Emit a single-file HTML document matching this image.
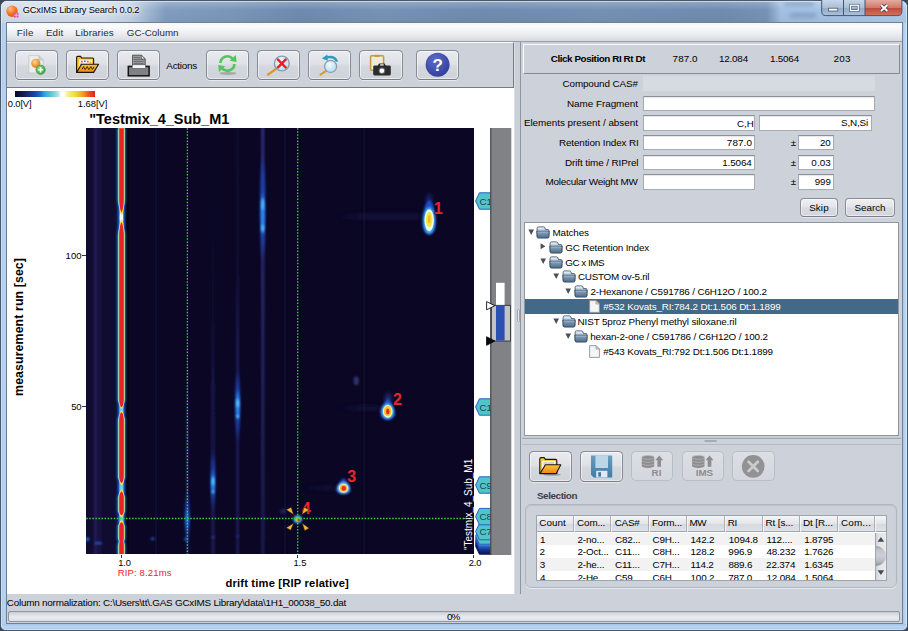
<!DOCTYPE html>
<html><head><meta charset="utf-8"><title>GCxIMS Library Search 0.0.2</title>
<style>
*{box-sizing:border-box;margin:0;padding:0}
html,body{width:908px;height:631px;overflow:hidden}
body{position:relative;font-family:"Liberation Sans",sans-serif;font-size:11px;color:#000;background:#3a4556}
.a{position:absolute}
.t{position:absolute;white-space:nowrap;line-height:1}
#frame{left:0;top:0;width:908px;height:631px;border-radius:7px 7px 6px 6px;border:1px solid #4a586c;background:linear-gradient(90deg,#9fc0e4,#b9d6f4 3px,#a4c6ea 6px,#a4c6ea 902px,#bcd8f6 904px,#a2c2e6 907px)}
#tbar{left:1px;top:1px;width:906px;height:22px;border-radius:6px 6px 0 0;background:linear-gradient(rgba(255,255,255,.25),rgba(255,255,255,0) 40%,rgba(0,0,0,.04)),linear-gradient(90deg,#d2dcea 0,#d6e0ed 100px,#c3d2e4 130px,#9fb6d2 148px,#819dbf 165px,#7a97ba 230px,#6e8baf 300px,#7693b6 380px,#6f8cb0 480px,#7491b4 600px,#6f8cb0 720px,#7693b7 766px,#a2c0e2 780px,#a8c5e6 850px,#b0cbea 906px)}
#bbar{left:1px;top:624px;width:906px;height:6px;border-radius:0 0 5px 5px;background:linear-gradient(#a4c6ea,#bad6f4 50%,#9fc0e4)}
#frame2{left:1px;top:1px;width:906px;height:629px;border-radius:6px 6px 5px 5px;border:1px solid rgba(235,244,252,.6)}
#content{left:5.5px;top:22px;width:897px;height:602px;background:#cdd1d9;border:1px solid #728096}
#menubar{left:6.5px;top:23px;width:895px;height:18.7px;background:linear-gradient(#f6f7f9 0,#fbfbfc 20%,#f0f1f4 50%,#e2e4e9 80%,#d6d9df 100%);border-bottom:1px solid #989da6}
.btn{position:absolute;border-radius:4.5px;border:1px solid #888d97;border-bottom-color:#797e88;background:linear-gradient(#e9ebef 0%,#dee1e6 45%,#d4d7dd 55%,#cfd3da 100%);box-shadow:inset 0 0 0 1px rgba(255,255,255,.5),0 1px 0 rgba(255,255,255,.5)}
.btn2{position:absolute;border-radius:4px;border:1px solid #888d97;border-bottom-color:#797e88;background:linear-gradient(#eff0f3 0%,#e3e5ea 45%,#d7dae0 55%,#d3d6dc 100%);box-shadow:inset 0 0 0 1px rgba(255,255,255,.5),0 1px 0 rgba(255,255,255,.5)}
.btnd{position:absolute;border-radius:4.5px;border:1px solid #b9bdc6;background:linear-gradient(#dcdfe4,#d3d6dd)}
</style></head><body>
<div class="a" id="frame"></div><div class="a" id="tbar"></div><div class="a" id="bbar"></div><div class="a" style="left:784px;top:2px;width:30px;height:4px;background:#7f9cbf;filter:blur(2px);opacity:.8"></div><div class="a" style="left:790px;top:13px;width:26px;height:5px;background:#7f9cbf;filter:blur(2px);opacity:.85"></div><div class="a" id="frame2"></div>
<div class="a" id="content"></div>
<div class="a" id="menubar"></div>
<div class="t" style="left:22.73px;top:6.33px;font-size:9.30px;letter-spacing:-0.180px;color:#000;text-shadow:0 0 5px rgba(255,255,255,.9),0 0 3px rgba(255,255,255,.8),0 0 8px rgba(255,255,255,.7)">GCxIMS Library Search 0.0.2</div>
<svg class="a" style="left:5px;top:4px" width="15" height="15" viewBox="5 4 15 15"><defs><radialGradient id="ti" cx=".35" cy=".3" r=".8"><stop offset="0" stop-color="#ffc08a"/><stop offset=".5" stop-color="#f47a2a"/><stop offset="1" stop-color="#d8521a"/></radialGradient></defs><circle cx="12" cy="11.2" r="5.7" fill="url(#ti)"/><rect x="14" y="13" width="4.4" height="4.4" fill="#e040a0"/><path d="M14 15.2H18.4M16.2 13V17.4" stroke="#fbd0ea" stroke-width=".8"/></svg>
<svg class="a" style="left:820px;top:0" width="84" height="18" viewBox="820 0 84 18">
<defs><linearGradient id="cb" x1="0" y1="0" x2="0" y2="1"><stop offset="0" stop-color="#c6d6ea"/><stop offset=".5" stop-color="#a9bfd9"/><stop offset=".52" stop-color="#93adcc"/><stop offset="1" stop-color="#a8c0dc"/></linearGradient>
<linearGradient id="cr" x1="0" y1="0" x2="0" y2="1"><stop offset="0" stop-color="#e2aca2"/><stop offset=".5" stop-color="#d07868"/><stop offset=".52" stop-color="#c04a3a"/><stop offset="1" stop-color="#d0725e"/></linearGradient></defs>
<path d="M821.7 0 L821.7 11.5 Q821.7 15.6 825.7 15.6 L865 15.6 L865 0Z" fill="url(#cb)"/>
<path d="M865 0 L865 15.6 L897.9 15.6 Q901.9 15.6 901.9 11.5 L901.9 0Z" fill="url(#cr)"/>
<path d="M821.7 0 L821.7 11.5 Q821.7 15.6 825.7 15.6 L897.9 15.6 Q901.9 15.6 901.9 11.5 L901.9 0 M843.5 0V15.6M865 0V15.6" fill="none" stroke="#47556a" stroke-width="1"/>
<rect x="828.4" y="8.2" width="9.4" height="2.8" fill="#fff" stroke="#4a5668" stroke-width=".8"/>
<rect x="850.6" y="5.2" width="7.6" height="5.4" fill="none" stroke="#4a5668" stroke-width="2.6"/><rect x="850.6" y="5.2" width="7.6" height="5.4" fill="none" stroke="#fff" stroke-width="1.3"/>
<path d="M881 5 L887.4 11 M887.4 5 L881 11" stroke="#4a3038" stroke-width="3.4"/><path d="M881 5 L887.4 11 M887.4 5 L881 11" stroke="#fff" stroke-width="2"/>
</svg>
<div class="t" style="left:16.82px;top:27.60px;font-size:9.80px;letter-spacing:0.266px;color:#262b35">File</div>
<div class="t" style="left:45.92px;top:27.60px;font-size:9.80px;letter-spacing:0.159px;color:#262b35">Edit</div>
<div class="t" style="left:75.22px;top:27.60px;font-size:9.80px;letter-spacing:0.118px;color:#262b35">Libraries</div>
<div class="t" style="left:126.81px;top:27.60px;font-size:9.80px;letter-spacing:0.004px;color:#262b35">GC-Column</div>

<div class="a" style="left:6.5px;top:42.0px;width:507.7px;height:46.0px;background:#cdd1d9;border-top:1px solid #fafbfc;border-right:1px solid #767b85;border-bottom:1px solid #767b85"></div>
<div class="btn" style="left:14.6px;top:50.0px;width:43.0px;height:30.2px;"></div>
<div class="btn" style="left:65.6px;top:50.0px;width:43.4px;height:30.2px;"></div>
<div class="btn" style="left:116.6px;top:50.0px;width:43.6px;height:30.2px;"></div>
<div class="btn" style="left:205.6px;top:50.0px;width:43.6px;height:30.2px;"></div>
<div class="btn" style="left:256.6px;top:50.0px;width:43.6px;height:30.2px;"></div>
<div class="btn" style="left:307.8px;top:50.0px;width:43.5px;height:30.2px;"></div>
<div class="btn" style="left:359.2px;top:50.0px;width:43.5px;height:30.2px;"></div>
<div class="btn" style="left:415.6px;top:50.0px;width:43.8px;height:30.2px;"></div>
<div class="t" style="left:166.30px;top:60.62px;font-size:9.90px;letter-spacing:-0.238px">Actions</div>
<svg class="a" style="left:8px;top:42px" width="506" height="46" viewBox="8 42 506 46">
<defs>
<radialGradient id="og" cx=".4" cy=".35" r=".7"><stop offset="0" stop-color="#fbd9a0"/><stop offset=".5" stop-color="#f3a040"/><stop offset="1" stop-color="#e07818"/></radialGradient>
<radialGradient id="gg" cx=".4" cy=".35" r=".7"><stop offset="0" stop-color="#8fe08a"/><stop offset="1" stop-color="#2f9e34"/></radialGradient>
<radialGradient id="lg" cx=".4" cy=".35" r=".8"><stop offset="0" stop-color="#eefaff"/><stop offset="1" stop-color="#a9d8ea"/></radialGradient>
<radialGradient id="hg" cx=".4" cy=".3" r=".8"><stop offset="0" stop-color="#5a6cc8"/><stop offset="1" stop-color="#2e3a98"/></radialGradient>
<linearGradient id="fo" x1="0" y1="0" x2="0" y2="1"><stop offset="0" stop-color="#fbc33a"/><stop offset="1" stop-color="#ee8a18"/></linearGradient>
</defs>
<path d="M28.8 55.6 L38.8 55.6 L43.2 60 L43.2 73 L28.8 73Z" fill="#ecedef" stroke="#c3c6cc" stroke-width=".8"/><path d="M38.8 55.6 L38.8 60 L43.2 60Z" fill="#cfd2d8" stroke="#b4b8bf" stroke-width=".6"/>
<circle cx="35.8" cy="63.3" r="4.6" fill="url(#og)"/>
<circle cx="40.6" cy="69.8" r="4.7" fill="url(#gg)" stroke="#2c8a30" stroke-width=".5"/><path d="M38 69.8H43.2M40.6 67.2V72.4" stroke="#fff" stroke-width="1.6"/>
<path d="M76.6 72 L76.6 57.6 Q76.6 56.4 77.8 56.4 L80.6 56.4 L81.6 58 L92.6 58 Q93.6 58 93.6 59 L93.6 72Z" fill="#f6c52a" stroke="#1c1508" stroke-width="1.1" stroke-linejoin="round"/>
<path d="M79.2 70 L79.2 59.6 L92 59.6 L92 70Z" fill="#f5efe0"/><g><rect x="81" y="60.8" width="1.6" height="1.6" fill="#e05a2a"/><rect x="84" y="60.4" width="1.6" height="1.6" fill="#4a7ad0"/><rect x="87" y="60.8" width="1.6" height="1.6" fill="#e05a2a"/><rect x="89.6" y="61.6" width="1.6" height="1.6" fill="#e8a030"/><rect x="80.4" y="63.6" width="1.6" height="1.6" fill="#4a7ad0"/></g>
<path d="M76.6 72.4 L81.6 64.2 L98.6 64.2 L93.6 72.4Z" fill="url(#fo)" stroke="#1c1508" stroke-width="1.1" stroke-linejoin="round"/>
<path d="M82 69.4 L83.6 66.6 L85.2 69.6 L87.2 66.6 L88.8 69.6 L90.8 66.6 L92.4 69.4 L94 66.8" fill="none" stroke="#1c1508" stroke-width=".9"/>
<path d="M132.6 55.2 L141.4 55.2 L145.2 59 L145.2 68.8 L132.6 68.8Z" fill="#9b9c9f" stroke="#3a3a3c" stroke-width=".8"/>
<path d="M141.4 55.2 L141.4 59 L145.2 59Z" fill="#e6e6e8" stroke="#3a3a3c" stroke-width=".6"/>
<path d="M134 57.6H140M134 59.6H143.6M134 61.6H143.6M134 63.6H143.6" stroke="#5c5d60" stroke-width=".8"/>
<rect x="128.3" y="66.4" width="20.8" height="9.4" fill="#808184" stroke="#141416" stroke-width="1.5"/>
<rect x="132.2" y="64.8" width="13.4" height="3.6" fill="#f4f4f5" stroke="#3a3a3c" stroke-width=".5"/>
<ellipse cx="228" cy="73.4" rx="8.5" ry="1.5" fill="#7c8a7c" opacity=".55"/>
<g fill="none" stroke="#55c45a" stroke-width="2.6"><path d="M220.4 63 A7 7 0 0 1 232.6 58.6"/><path d="M234.4 64 A7 7 0 0 1 222.2 68.4"/></g>
<path d="M229.6 60.8 L236.6 62 L235.8 55Z" fill="#55c45a"/><path d="M225.2 66.2 L218.2 65 L219 72Z" fill="#55c45a"/>
<path d="M276 69 L268 74.6" stroke="#d99a24" stroke-width="2.2" stroke-linecap="round"/>
<circle cx="281.8" cy="63.5" r="7.4" fill="url(#lg)" stroke="#8c9eae" stroke-width="1.4"/>
<path d="M278 59.7 L285.6 67.3 M285.6 59.7 L278 67.3" stroke="#e8202c" stroke-width="2.5" stroke-linecap="round"/>
<path d="M326.4 70.6 L320.4 74.8" stroke="#d99a24" stroke-width="2" stroke-linecap="round"/>
<circle cx="330.6" cy="66.4" r="6" fill="url(#lg)" stroke="#8c9eae" stroke-width="1.3"/>
<path d="M337 61.6 Q334.6 55.6 326.6 57.4" fill="none" stroke="#2e9cc2" stroke-width="2.4"/><path d="M321.8 58.6 L327.4 54.4 L327.8 60.8Z" fill="#2e9cc2"/>
<rect x="370.6" y="55.8" width="13" height="14.4" rx="1" fill="#f1ead8" stroke="#c8964a" stroke-width="1.5"/><rect x="374.6" y="54.8" width="5" height="2.2" fill="#c8964a"/>
<path d="M373.2 66.8 Q373.2 65.4 374.6 65.4 L377.8 65.4 L379 63.4 L384.6 63.4 L385.8 65.4 L389.4 65.4 Q390.8 65.4 390.8 66.8 L390.8 74 Q390.8 75.4 389.4 75.4 L374.6 75.4 Q373.2 75.4 373.2 74Z" fill="#2c2c2e"/>
<circle cx="381.9" cy="70.8" r="3.3" fill="#6a6a6e"/><circle cx="381.9" cy="70.8" r="2.3" fill="#fff"/><rect x="380.2" y="64.2" width="3.4" height="1.4" fill="#e8e8ea"/>
<circle cx="437.6" cy="64.8" r="12" fill="url(#hg)"/>
<text x="437.7" y="70.8" text-anchor="middle" font-family="Liberation Sans, sans-serif" font-weight="bold" font-size="17" fill="#fff">?</text>
</svg>

<div class="a" style="left:6.8px;top:88.0px;width:507.4px;height:506.0px;background:#fff"></div>
<div class="a" style="left:15px;top:90.8px;width:80px;height:5.8px;background:linear-gradient(90deg,#07071f 0%,#14205c 12%,#1b46a8 25%,#1e6fd0 32%,#2ea6e2 37%,#5cc6d4 45%,#a8e0e4 53%,#ffffff 58%,#ffffff 61%,#f6f08c 66%,#efe236 74%,#f6a324 84%,#ee4a22 93%,#e61f22 100%)"></div>
<div class="t" style="left:7.87px;top:99.14px;font-size:9.40px;letter-spacing:-0.159px">0.0[V]</div>
<div class="t" style="left:77.80px;top:99.14px;font-size:9.40px;letter-spacing:-0.023px">1.68[V]</div>
<div class="t" style="left:89.26px;top:111.53px;font-size:14.50px;letter-spacing:-0.022px;font-weight:bold">&quot;Testmix_4_Sub_M1</div>
<svg class="a" style="left:85.8px;top:127.8px" width="388.4" height="426.7" viewBox="85.8 127.8 388.4 426.7">
<defs>
<filter id="b03" x="-50%" y="-5%" width="200%" height="110%"><feGaussianBlur stdDeviation="0.35"/></filter>
<filter id="b05" x="-50%" y="-5%" width="200%" height="110%"><feGaussianBlur stdDeviation="0.6"/></filter>
<filter id="b3h" x="-30%" y="-200%" width="160%" height="500%"><feGaussianBlur stdDeviation="8 2"/></filter>
<filter id="b1" x="-50%" y="-50%" width="200%" height="200%"><feGaussianBlur stdDeviation="1"/></filter>
<filter id="b2" x="-50%" y="-50%" width="200%" height="200%"><feGaussianBlur stdDeviation="2"/></filter>
<filter id="b3" x="-100%" y="-50%" width="300%" height="200%"><feGaussianBlur stdDeviation="1.5 6"/></filter>
<filter id="b4" x="-100%" y="-50%" width="300%" height="200%"><feGaussianBlur stdDeviation="1.2 3"/></filter>
</defs>
<rect x="85" y="127" width="390" height="428" fill="#0a0624"/>
<defs>
<linearGradient id="vA" gradientUnits="userSpaceOnUse" x1="0" y1="128" x2="0" y2="555"><stop offset="0" stop-color="#2a2a70" stop-opacity="0"/><stop offset=".45" stop-color="#2a2a70" stop-opacity=".15"/><stop offset=".62" stop-color="#2a2a70" stop-opacity=".55"/><stop offset="1" stop-color="#2a2a70" stop-opacity=".6"/></linearGradient>
<linearGradient id="vB" gradientUnits="userSpaceOnUse" x1="0" y1="128" x2="0" y2="555"><stop offset="0" stop-color="#2a2a70" stop-opacity="0"/><stop offset=".55" stop-color="#2a2a70" stop-opacity=".08"/><stop offset=".72" stop-color="#2a2a70" stop-opacity=".5"/><stop offset="1" stop-color="#2a2a70" stop-opacity=".55"/></linearGradient>
<linearGradient id="vC" gradientUnits="userSpaceOnUse" x1="0" y1="128" x2="0" y2="555"><stop offset="0" stop-color="#2c2c74" stop-opacity=".1"/><stop offset=".3" stop-color="#2c2c74" stop-opacity=".15"/><stop offset=".5" stop-color="#2c2c74" stop-opacity=".55"/><stop offset="1" stop-color="#2c2c74" stop-opacity=".55"/></linearGradient>
<linearGradient id="vD" gradientUnits="userSpaceOnUse" x1="0" y1="128" x2="0" y2="555"><stop offset="0" stop-color="#34348a" stop-opacity=".85"/><stop offset=".3" stop-color="#30307c" stop-opacity=".8"/><stop offset="1" stop-color="#2a2a6c" stop-opacity=".6"/></linearGradient>
<filter id="bs" filterUnits="userSpaceOnUse" x="80" y="120" width="400" height="440"><feGaussianBlur stdDeviation="1.1 0"/></filter>
</defs>
<rect x="85" y="127" width="32" height="429" fill="#17133f" opacity=".45"/>
<!-- faint vertical streaks -->
<g filter="url(#bs)">
<rect x="93.5" y="127" width="3.6" height="429" fill="#221f52"/>
<rect x="98.3" y="127" width="2.6" height="429" fill="#1a1744"/>
<rect x="185.7" y="127" width="3" height="429" fill="url(#vB)"/>
<rect x="211.3" y="127" width="3" height="429" fill="url(#vA)"/>
<rect x="236" y="127" width="3" height="429" fill="url(#vC)"/>
<rect x="261" y="127" width="3.2" height="429" fill="url(#vD)"/>
<rect x="363" y="127" width="2.4" height="429" fill="#0d0a2c"/>
<rect x="155" y="127" width="2" height="429" fill="#100d34"/>
<rect x="284" y="127" width="2" height="429" fill="#0f0c31"/>
</g>
<!-- horizontal tails -->
<g filter="url(#b3h)" opacity=".6">
<rect x="350" y="214" width="75" height="5" fill="#1a1a4a"/>
<rect x="350" y="406" width="34" height="4" fill="#1b1b50"/>
<rect x="315" y="486" width="24" height="3.5" fill="#1b1b50"/>
</g>
<rect x="125" y="128" width="3.2" height="427" fill="#04030c"/>
<g filter="url(#b1)"><polygon points="116.6,128.0 116.6,200.0 116.7,201.0 116.9,202.0 117.0,203.0 117.2,204.0 117.4,205.0 117.5,206.0 117.5,228.0 117.4,229.0 117.2,230.0 117.0,231.0 116.9,232.0 116.7,233.0 116.6,234.0 116.6,399.0 116.7,400.0 116.9,401.0 117.2,402.0 117.5,403.0 117.5,416.0 117.2,417.0 116.9,418.0 116.7,419.0 116.6,420.0 116.6,477.0 116.9,478.0 117.3,479.0 117.5,480.0 117.5,494.0 117.3,495.0 116.9,496.0 116.6,497.0 116.6,511.0 117.0,512.0 117.5,513.0 117.5,524.0 117.0,525.0 116.6,526.0 116.6,538.0 116.8,539.0 117.1,540.0 117.5,541.0 117.5,542.0 117.1,543.0 116.8,544.0 116.6,545.0 116.6,554.0 125.8,554.0 125.8,545.0 125.6,544.0 125.3,543.0 124.9,542.0 124.9,541.0 125.3,540.0 125.6,539.0 125.8,538.0 125.8,526.0 125.4,525.0 124.9,524.0 124.9,513.0 125.4,512.0 125.8,511.0 125.8,497.0 125.5,496.0 125.1,495.0 124.9,494.0 124.9,480.0 125.1,479.0 125.5,478.0 125.8,477.0 125.8,420.0 125.7,419.0 125.5,418.0 125.2,417.0 124.9,416.0 124.9,403.0 125.2,402.0 125.5,401.0 125.7,400.0 125.8,399.0 125.8,234.0 125.7,233.0 125.5,232.0 125.4,231.0 125.2,230.0 125.0,229.0 124.9,228.0 124.9,206.0 125.0,205.0 125.2,204.0 125.4,203.0 125.5,202.0 125.7,201.0 125.8,200.0 125.8,128.0" fill="#1c64d2"/></g>
<g filter="url(#b05)"><polygon points="117.7,128.0 117.7,200.0 117.8,201.0 117.9,202.0 118.0,203.0 118.2,204.0 118.3,205.0 118.5,206.0 118.8,207.0 119.0,208.0 119.2,209.0 119.2,225.0 119.0,226.0 118.8,227.0 118.5,228.0 118.3,229.0 118.2,230.0 118.0,231.0 117.9,232.0 117.8,233.0 117.7,234.0 117.7,399.0 117.8,400.0 117.9,401.0 118.1,402.0 118.4,403.0 118.8,404.0 119.2,405.0 119.2,406.0 119.2,413.0 119.2,414.0 118.8,415.0 118.4,416.0 118.1,417.0 117.9,418.0 117.8,419.0 117.7,420.0 117.7,477.0 117.9,478.0 118.2,479.0 118.6,480.0 119.2,481.0 119.2,482.0 119.2,492.0 119.2,493.0 118.6,494.0 118.2,495.0 117.9,496.0 117.7,497.0 117.7,511.0 118.0,512.0 118.5,513.0 119.2,514.0 119.2,523.0 118.5,524.0 118.0,525.0 117.7,526.0 117.7,538.0 117.9,539.0 118.1,540.0 118.4,541.0 118.4,542.0 118.1,543.0 117.9,544.0 117.7,545.0 117.7,554.0 124.7,554.0 124.7,545.0 124.5,544.0 124.3,543.0 124.0,542.0 124.0,541.0 124.3,540.0 124.5,539.0 124.7,538.0 124.7,526.0 124.4,525.0 123.9,524.0 123.2,523.0 123.2,514.0 123.9,513.0 124.4,512.0 124.7,511.0 124.7,497.0 124.5,496.0 124.2,495.0 123.8,494.0 123.2,493.0 123.2,492.0 123.2,482.0 123.2,481.0 123.8,480.0 124.2,479.0 124.5,478.0 124.7,477.0 124.7,420.0 124.6,419.0 124.5,418.0 124.3,417.0 124.0,416.0 123.7,415.0 123.2,414.0 123.2,413.0 123.2,406.0 123.2,405.0 123.7,404.0 124.0,403.0 124.3,402.0 124.5,401.0 124.6,400.0 124.7,399.0 124.7,234.0 124.6,233.0 124.5,232.0 124.4,231.0 124.2,230.0 124.1,229.0 123.9,228.0 123.6,227.0 123.4,226.0 123.2,225.0 123.2,209.0 123.4,208.0 123.6,207.0 123.9,206.0 124.1,205.0 124.2,204.0 124.4,203.0 124.5,202.0 124.6,201.0 124.7,200.0 124.7,128.0" fill="#6fcbee"/></g>
<ellipse cx="121.2" cy="217" rx="1.6" ry="6" fill="#fff" filter="url(#b05)"/>
<g filter="url(#b05)"><polygon points="118.5,128.0 118.5,200.0 118.6,201.0 118.6,202.0 118.7,203.0 118.8,204.0 118.9,205.0 119.0,206.0 119.1,207.0 119.3,208.0 119.4,209.0 119.6,210.0 119.8,211.0 120.0,212.0 120.4,213.0 120.8,214.0 121.4,215.0 121.4,219.0 120.8,220.0 120.4,221.0 120.0,222.0 119.8,223.0 119.6,224.0 119.4,225.0 119.3,226.0 119.1,227.0 119.0,228.0 118.9,229.0 118.8,230.0 118.7,231.0 118.6,232.0 118.6,233.0 118.5,234.0 118.5,399.0 118.5,400.0 118.7,401.0 118.8,402.0 119.0,403.0 119.2,404.0 119.4,405.0 119.7,406.0 120.1,407.0 120.7,408.0 121.4,409.0 121.4,410.0 120.7,411.0 120.1,412.0 119.7,413.0 119.4,414.0 119.2,415.0 119.0,416.0 118.8,417.0 118.7,418.0 118.5,419.0 118.5,420.0 118.5,477.0 118.6,478.0 118.8,479.0 118.9,480.0 119.2,481.0 119.4,482.0 119.8,483.0 120.3,484.0 121.4,485.0 121.4,489.0 120.3,490.0 119.8,491.0 119.4,492.0 119.2,493.0 118.9,494.0 118.8,495.0 118.6,496.0 118.5,497.0 118.5,511.0 118.7,512.0 118.9,513.0 119.2,514.0 119.6,515.0 120.1,516.0 121.4,517.0 121.4,520.0 120.1,521.0 119.6,522.0 119.2,523.0 118.9,524.0 118.7,525.0 118.5,526.0 118.5,538.0 118.7,539.0 119.0,540.0 119.4,541.0 119.4,542.0 119.0,543.0 118.7,544.0 118.5,545.0 118.5,554.0 124.3,554.0 124.3,545.0 124.1,544.0 123.8,543.0 123.4,542.0 123.4,541.0 123.8,540.0 124.1,539.0 124.3,538.0 124.3,526.0 124.1,525.0 123.9,524.0 123.6,523.0 123.2,522.0 122.7,521.0 121.4,520.0 121.4,517.0 122.7,516.0 123.2,515.0 123.6,514.0 123.9,513.0 124.1,512.0 124.3,511.0 124.3,497.0 124.2,496.0 124.0,495.0 123.9,494.0 123.6,493.0 123.4,492.0 123.0,491.0 122.5,490.0 121.4,489.0 121.4,485.0 122.5,484.0 123.0,483.0 123.4,482.0 123.6,481.0 123.9,480.0 124.0,479.0 124.2,478.0 124.3,477.0 124.3,420.0 124.3,419.0 124.1,418.0 124.0,417.0 123.8,416.0 123.6,415.0 123.4,414.0 123.1,413.0 122.7,412.0 122.1,411.0 121.4,410.0 121.4,409.0 122.1,408.0 122.7,407.0 123.1,406.0 123.4,405.0 123.6,404.0 123.8,403.0 124.0,402.0 124.1,401.0 124.3,400.0 124.3,399.0 124.3,234.0 124.2,233.0 124.2,232.0 124.1,231.0 124.0,230.0 123.9,229.0 123.8,228.0 123.7,227.0 123.5,226.0 123.4,225.0 123.2,224.0 123.0,223.0 122.8,222.0 122.4,221.0 122.0,220.0 121.4,219.0 121.4,215.0 122.0,214.0 122.4,213.0 122.8,212.0 123.0,211.0 123.2,210.0 123.4,209.0 123.5,208.0 123.7,207.0 123.8,206.0 123.9,205.0 124.0,204.0 124.1,203.0 124.2,202.0 124.2,201.0 124.3,200.0 124.3,128.0" fill="#f1e23a"/></g>
<g filter="url(#b03)"><polygon points="119.0,128.0 119.0,200.0 119.0,201.0 119.1,202.0 119.2,203.0 119.3,204.0 119.4,205.0 119.5,206.0 119.7,207.0 119.9,208.0 120.1,209.0 120.4,210.0 120.8,211.0 121.3,212.0 121.3,222.0 120.8,223.0 120.4,224.0 120.1,225.0 119.9,226.0 119.7,227.0 119.5,228.0 119.4,229.0 119.3,230.0 119.2,231.0 119.1,232.0 119.0,233.0 119.0,234.0 119.0,399.0 119.0,400.0 119.1,401.0 119.2,402.0 119.4,403.0 119.7,404.0 119.9,405.0 120.3,406.0 121.3,407.0 121.3,412.0 120.3,413.0 119.9,414.0 119.7,415.0 119.4,416.0 119.2,417.0 119.1,418.0 119.0,419.0 119.0,420.0 119.0,477.0 119.1,478.0 119.3,479.0 119.6,480.0 119.9,481.0 120.5,482.0 121.3,483.0 121.3,491.0 120.5,492.0 119.9,493.0 119.6,494.0 119.3,495.0 119.1,496.0 119.0,497.0 119.0,511.0 119.2,512.0 119.5,513.0 120.0,514.0 121.3,515.0 121.3,522.0 120.0,523.0 119.5,524.0 119.2,525.0 119.0,526.0 119.0,538.0 119.1,539.0 119.2,540.0 119.4,541.0 119.4,542.0 119.2,543.0 119.1,544.0 119.0,545.0 119.0,554.0 123.6,554.0 123.6,545.0 123.5,544.0 123.4,543.0 123.2,542.0 123.2,541.0 123.4,540.0 123.5,539.0 123.6,538.0 123.6,526.0 123.4,525.0 123.1,524.0 122.6,523.0 121.3,522.0 121.3,515.0 122.6,514.0 123.1,513.0 123.4,512.0 123.6,511.0 123.6,497.0 123.5,496.0 123.3,495.0 123.0,494.0 122.7,493.0 122.1,492.0 121.3,491.0 121.3,483.0 122.1,482.0 122.7,481.0 123.0,480.0 123.3,479.0 123.5,478.0 123.6,477.0 123.6,420.0 123.6,419.0 123.5,418.0 123.4,417.0 123.2,416.0 122.9,415.0 122.7,414.0 122.3,413.0 121.3,412.0 121.3,407.0 122.3,406.0 122.7,405.0 122.9,404.0 123.2,403.0 123.4,402.0 123.5,401.0 123.6,400.0 123.6,399.0 123.6,234.0 123.6,233.0 123.5,232.0 123.4,231.0 123.3,230.0 123.2,229.0 123.1,228.0 122.9,227.0 122.7,226.0 122.5,225.0 122.2,224.0 121.8,223.0 121.3,222.0 121.3,212.0 121.8,211.0 122.2,210.0 122.5,209.0 122.7,208.0 122.9,207.0 123.1,206.0 123.2,205.0 123.3,204.0 123.4,203.0 123.5,202.0 123.6,201.0 123.6,200.0 123.6,128.0" fill="#ea2225"/></g>

<!-- blue streaks -->
<g filter="url(#b3)">
<ellipse cx="262.5" cy="208" rx="2.4" ry="46" fill="#1a3fb0"/>
<ellipse cx="237.5" cy="405" rx="2.3" ry="30" fill="#1a3fb0"/>
<ellipse cx="212.8" cy="480" rx="2.2" ry="24" fill="#1a3fb0"/>
<ellipse cx="187" cy="517" rx="2.2" ry="20" fill="#1a3fb0"/>
</g>
<g filter="url(#b4)">
<ellipse cx="262.5" cy="214" rx="1.9" ry="19" fill="#2a8cf0"/>
<ellipse cx="237.5" cy="405" rx="1.9" ry="13" fill="#2a8cf0"/>
<ellipse cx="212.8" cy="483" rx="1.8" ry="10" fill="#2a8cf0"/>
<ellipse cx="187" cy="519" rx="1.6" ry="8" fill="#2574dc"/>
</g>
<g filter="url(#b1)">
<ellipse cx="262.5" cy="204" rx="1.1" ry="6" fill="#55c8f4"/>
<ellipse cx="262.5" cy="228" rx="1.2" ry="4" fill="#55c8f4"/>
<ellipse cx="237.5" cy="403" rx="1.2" ry="4" fill="#5fd0f6"/>
<ellipse cx="237.5" cy="416" rx="1.2" ry="2" fill="#5fd0f6"/>
<ellipse cx="212.8" cy="481" rx="1.1" ry="4" fill="#5fd0f6"/>
<ellipse cx="212.8" cy="491.5" rx="1.1" ry="1.6" fill="#5fd0f6"/>
<!-- bottom row spots -->
<ellipse cx="87.5" cy="539" rx="1.5" ry="2" fill="#2a78e0"/>
<ellipse cx="98" cy="543" rx="4" ry="1.1" fill="#2a55c0"/>
<ellipse cx="152.5" cy="538.5" rx="2.2" ry="1.8" fill="#2d3f9a"/>
<ellipse cx="186" cy="539" rx="2" ry="2" fill="#2450b8"/>
<ellipse cx="213" cy="537" rx="1.8" ry="2" fill="#222c78"/>
<ellipse cx="237.5" cy="536" rx="1.6" ry="2" fill="#1e2468"/>
<ellipse cx="356" cy="380.5" rx="2.6" ry="4.5" fill="#30306e"/>
<ellipse cx="283" cy="511" rx="3" ry="2.5" fill="#23235c"/>
</g>
<!-- peak 1 -->
<g filter="url(#b2)"><ellipse cx="429" cy="203" rx="2.6" ry="10" fill="#1f2878"/></g>
<g filter="url(#b1)">
<path d="M429 199 C432.5 203 435.8 211 435.8 221 C435.8 230 433 234.5 429 234.5 C425 234.5 422.2 230 422.2 221 C422.2 211 425.5 203 429 199Z" fill="#1b50d0"/>
<ellipse cx="429" cy="220.5" rx="5.6" ry="13" fill="#45b6ee"/>
</g>
<g filter="url(#b05)">
<ellipse cx="429" cy="220" rx="4.7" ry="11" fill="#f4fbf6"/>
<ellipse cx="429" cy="219.3" rx="3.3" ry="7.8" fill="#f3e544"/>
<ellipse cx="429" cy="219" rx="1.3" ry="4" fill="#f5b62a"/>
</g>
<!-- peak 2 -->
<g filter="url(#b2)"><ellipse cx="388" cy="399" rx="2.5" ry="6" fill="#2a3a90"/></g>
<g filter="url(#b1)">
<path d="M387.5 398.5 C391 402 394.8 407.5 394.8 412.5 C394.8 417.5 391.5 419.8 387.5 419.8 C383.5 419.8 380.2 417.5 380.2 412.5 C380.2 407.5 384 402 387.5 398.5Z" fill="#1b56d6"/>
<ellipse cx="387.5" cy="411.2" rx="5.9" ry="7.4" fill="#55c4f0"/>
</g>
<g filter="url(#b05)">
<ellipse cx="387.5" cy="411.2" rx="4.8" ry="6.3" fill="#f6f6d0"/>
<ellipse cx="387.5" cy="411" rx="3.8" ry="5.1" fill="#f4c62c"/>
<ellipse cx="387.6" cy="411.2" rx="1.7" ry="2.8" fill="#ea2a22"/>
</g>
<!-- peak 3 -->
<g filter="url(#b1)">
<path d="M343.3 478 C347 481 350.5 486 350.5 489.5 C350.5 492.5 347 494 343.3 494 C339.5 494 336 492.5 336 489.5 C336 486 339.5 481 343.3 478Z" fill="#1b56d6"/>
<ellipse cx="343.3" cy="487.8" rx="5.6" ry="5.2" fill="#8fdcf4"/>
</g>
<g filter="url(#b05)">
<ellipse cx="343.3" cy="488" rx="4.5" ry="4.2" fill="#f6f2b0"/>
<ellipse cx="343.3" cy="488" rx="3.6" ry="3.4" fill="#f4b62a"/>
<ellipse cx="343.6" cy="488.2" rx="2.2" ry="2.3" fill="#ea2a22"/>
</g>
<!-- peak 4 -->
<g filter="url(#b1)">
<ellipse cx="297.5" cy="519" rx="4.6" ry="4.2" fill="#1f66d8"/>
<ellipse cx="297.5" cy="519" rx="3.4" ry="3.2" fill="#59c8e0"/>
</g>
<g filter="url(#b05)">
<ellipse cx="297.5" cy="519.3" rx="2.2" ry="2" fill="#9ad23c"/>
<ellipse cx="298.5" cy="520" rx="1.5" ry="1.3" fill="#ea2a22"/>
</g>

<g stroke="#3ad43c" stroke-width="1.3" stroke-dasharray="1.5 1.56" fill="none">
<line x1="187.2" y1="128" x2="187.2" y2="554.5"/>
<line x1="297.5" y1="128" x2="297.5" y2="554.5"/>
<line x1="86" y1="518.3" x2="474.2" y2="518.3"/>
</g>

<g font-family="Liberation Sans, sans-serif" font-weight="bold" font-size="16" fill="#e6252c" stroke="#3a0c14" stroke-width=".5" paint-order="stroke">
<text x="433.5" y="214">1</text>
<text x="392.8" y="405">2</text>
<text x="347" y="482">3</text>
<text x="301.5" y="514">4</text>
</g>
<g fill="#f0b432" stroke="#1a1030" stroke-width=".5">
<path d="M293.5 514.5 L286 509.5 L291 507Z"/>
<path d="M301.5 514.5 L309 509.5 L304 507Z"/>
<path d="M293.5 523 L286 527.5 L290.5 530Z"/>
<path d="M302 523 L309 528 L304.5 530.5Z"/>
</g>
<text transform="translate(472.3,549.8) rotate(-90)" font-family="Liberation Sans, sans-serif" font-size="10" fill="#fff">"Testmix_4_Sub_M1</text>


</svg>

<div class="t" style="left:65.49px;top:250.76px;font-size:9.50px;letter-spacing:0.114px">100</div>
<div class="t" style="left:71.22px;top:401.76px;font-size:9.50px;letter-spacing:-0.232px">50</div>
<div class="a" style="left:81.8px;top:254.8px;width:4.2px;height:1.0px;background:#333"></div>
<div class="a" style="left:81.8px;top:405.8px;width:4.2px;height:1.0px;background:#333"></div>
<div class="a" style="left:120.7px;top:554.5px;width:1.0px;height:3.0px;background:#333"></div>
<div class="a" style="left:297.0px;top:554.5px;width:1.0px;height:3.0px;background:#333"></div>
<div class="a" style="left:473.1px;top:554.5px;width:1.0px;height:3.0px;background:#333"></div>
<div class="t" style="left:118.20px;top:558.34px;font-size:9.40px;letter-spacing:-0.066px">1.0</div>
<div class="t" style="left:293.40px;top:558.34px;font-size:9.40px;letter-spacing:0.007px">1.5</div>
<div class="t" style="left:468.63px;top:558.34px;font-size:9.40px;letter-spacing:-0.084px">2.0</div>
<div class="t" style="left:117.84px;top:567.56px;font-size:9.50px;letter-spacing:0.134px;color:#e8252c">RIP: 8.21ms</div>
<div class="t" style="left:225.45px;top:578.22px;font-size:11.20px;letter-spacing:0.176px;font-weight:bold">drift time [RIP relative]</div>
<svg class="a" style="left:8px;top:240px" width="30" height="170" viewBox="8 240 30 170"><text transform="translate(23.2,395.9) rotate(-90)" font-family="Liberation Sans, sans-serif" font-weight="bold" font-size="12.3" letter-spacing="0.126">measurement run [sec]</text></svg>
<svg class="a" style="left:474px;top:120px" width="40" height="440" viewBox="474 120 40 440" font-family="Liberation Sans, sans-serif" font-size="9.8">
<path d="M475.6 546.0 L479.4 537.8 L492 537.8 L492 554.2 L479.4 554.2 Z" fill="#0e1c62" stroke="#0a1450" stroke-width="1"/>
<path d="M475.6 544.0 L479.4 535.8 L492 535.8 L492 552.2 L479.4 552.2 Z" fill="#14297e" stroke="#10206a" stroke-width="1"/>
<path d="M475.6 542.0 L479.4 533.8 L492 533.8 L492 550.2 L479.4 550.2 Z" fill="#1b3c9c" stroke="#172f86" stroke-width="1"/>
<path d="M475.6 540.0 L479.4 531.8 L492 531.8 L492 548.2 L479.4 548.2 Z" fill="#2458b8" stroke="#1f48a4" stroke-width="1"/>
<path d="M475.6 538.0 L479.4 529.8 L492 529.8 L492 546.2 L479.4 546.2 Z" fill="#3a92d0" stroke="#2b5fc6" stroke-width="1"/>
<path d="M475.6 536.0 L479.4 527.8 L492 527.8 L492 544.2 L479.4 544.2 Z" fill="#4fc5ca" stroke="#2b5fc6" stroke-width="1"/>
<path d="M475.6 531.6 L479.4 523.4 L492 523.4 L492 539.8 L479.4 539.8 Z" fill="#4fc5ca" stroke="#2b5fc6" stroke-width="1"/>
<text x="479.5" y="535.1" fill="#16454c">C7</text>
<path d="M475.6 516.6 L479.4 508.4 L492 508.4 L492 524.8 L479.4 524.8 Z" fill="#4fc5ca" stroke="#2b5fc6" stroke-width="1"/>
<text x="479.5" y="520.1" fill="#16454c">C8</text>
<path d="M475.6 485.0 L479.4 476.8 L492 476.8 L492 493.2 L479.4 493.2 Z" fill="#4fc5ca" stroke="#2b5fc6" stroke-width="1"/>
<text x="479.5" y="488.5" fill="#16454c">C9</text>
<path d="M475.6 407.0 L479.4 398.8 L492 398.8 L492 415.2 L479.4 415.2 Z" fill="#4fc5ca" stroke="#2b5fc6" stroke-width="1"/>
<text x="479.5" y="410.5" fill="#16454c">C1</text>
<path d="M475.6 201.0 L479.4 192.8 L492 192.8 L492 209.2 L479.4 209.2 Z" fill="#4fc5ca" stroke="#2b5fc6" stroke-width="1"/>
<text x="479.5" y="204.5" fill="#16454c">C1</text>
<rect x="490.3" y="128" width="21" height="427" fill="#808285"/>
<rect x="490.3" y="128" width="1" height="427" fill="#3c3c40"/>
<rect x="496" y="282.8" width="8.6" height="22.5" fill="#fff"/>
<rect x="491.3" y="305.3" width="19.3" height="35.7" fill="#c2c3c6" stroke="#222" stroke-width=".8"/>
<rect x="496" y="305.3" width="8.6" height="35.3" fill="#2a50b2"/>
<path d="M486.6 301.6 L494.8 305.7 L486.6 309.8Z" fill="#fff" stroke="#111" stroke-width=".9"/>
<path d="M486.6 336.8 L494.8 341 L486.6 345.3Z" fill="#0a0a0a" stroke="#0a0a0a" stroke-width=".9"/>
</svg>

<div class="a" style="left:514.2px;top:42.0px;width:7.0px;height:552.0px;background:#cbcfd7;border-left:1px solid #dcdfe5;border-right:1px solid #8f949d"></div>
<div class="a" style="left:516.5px;top:309px;width:3px;height:13px;border:1px solid #9da2ab;border-radius:1.5px;background:#e9ebef"></div>
<div class="a" style="left:522.5px;top:44.0px;width:377.5px;height:29.5px;background:#cdd1d9;border:1px solid;border-color:#fbfbfc #858a94 #858a94 #fbfbfc"></div>
<div class="t" style="left:550.70px;top:53.72px;font-size:9.90px;letter-spacing:-0.432px;font-weight:bold">Click Position RI Rt Dt</div>
<div class="t" style="left:672.61px;top:53.72px;font-size:9.90px;letter-spacing:0.048px">787.0</div>
<div class="t" style="left:718.96px;top:53.72px;font-size:9.90px;letter-spacing:-0.201px">12.084</div>
<div class="t" style="left:769.96px;top:53.72px;font-size:9.90px;letter-spacing:-0.201px">1.5064</div>
<div class="t" style="left:833.50px;top:53.72px;font-size:9.90px;letter-spacing:0.204px">203</div>
<div class="t" style="left:562.50px;top:79.32px;font-size:9.90px;letter-spacing:-0.119px">Compound CAS#</div>
<div class="t" style="left:566.91px;top:98.82px;font-size:9.90px;letter-spacing:-0.020px">Name Fragment</div>
<div class="t" style="left:523.91px;top:118.42px;font-size:9.90px;letter-spacing:-0.031px">Elements present / absent</div>
<div class="t" style="left:558.91px;top:138.12px;font-size:9.90px;letter-spacing:-0.111px">Retention Index RI</div>
<div class="t" style="left:564.91px;top:157.72px;font-size:9.90px;letter-spacing:-0.084px">Drift time / RIPrel</div>
<div class="t" style="left:545.41px;top:177.22px;font-size:9.90px;letter-spacing:-0.218px">Molecular Weight MW</div>
<div class="a" style="left:643.0px;top:75.6px;width:231.5px;height:15.6px;background:#d6dae1"></div>
<div class="a" style="left:643.0px;top:95.6px;width:231.5px;height:15.6px;background:#fff;border:1px solid #a6aab3;border-top-color:#8b909a;box-shadow:inset 0 1px 1px rgba(0,0,0,.10)"></div>
<div class="a" style="left:643.0px;top:115.2px;width:111.8px;height:15.6px;background:#fff;border:1px solid #a6aab3;border-top-color:#8b909a;box-shadow:inset 0 1px 1px rgba(0,0,0,.10)"></div>
<div class="t" style="left:737.09px;top:118.59px;font-size:9.70px">C,H</div>
<div class="a" style="left:758.5px;top:115.2px;width:113.5px;height:15.6px;background:#fff;border:1px solid #a6aab3;border-top-color:#8b909a;box-shadow:inset 0 1px 1px rgba(0,0,0,.10)"></div>
<div class="t" style="left:841.05px;top:118.42px;font-size:9.90px;letter-spacing:-0.166px">S,N,Si</div>
<div class="a" style="left:643.0px;top:134.9px;width:111.8px;height:15.6px;background:#fff;border:1px solid #a6aab3;border-top-color:#8b909a;box-shadow:inset 0 1px 1px rgba(0,0,0,.10)"></div>
<div class="t" style="left:726.80px;top:138.12px;font-size:9.90px;letter-spacing:0.098px">787.0</div>
<div class="a" style="left:643.0px;top:154.5px;width:111.8px;height:15.6px;background:#fff;border:1px solid #a6aab3;border-top-color:#8b909a;box-shadow:inset 0 1px 1px rgba(0,0,0,.10)"></div>
<div class="t" style="left:722.16px;top:157.72px;font-size:9.90px;letter-spacing:-0.121px">1.5064</div>
<div class="a" style="left:643.0px;top:174.0px;width:111.8px;height:15.6px;background:#fff;border:1px solid #a6aab3;border-top-color:#8b909a;box-shadow:inset 0 1px 1px rgba(0,0,0,.10)"></div>
<div class="t" style="left:790.70px;top:138.12px;font-size:9.90px">±</div>
<div class="a" style="left:798.3px;top:134.9px;width:35.4px;height:15.6px;background:#fff;border:1px solid #a6aab3;border-top-color:#8b909a;box-shadow:inset 0 1px 1px rgba(0,0,0,.10)"></div>
<div class="t" style="left:819.97px;top:138.29px;font-size:9.70px">20</div>
<div class="t" style="left:790.70px;top:157.72px;font-size:9.90px">±</div>
<div class="a" style="left:798.3px;top:154.5px;width:35.4px;height:15.6px;background:#fff;border:1px solid #a6aab3;border-top-color:#8b909a;box-shadow:inset 0 1px 1px rgba(0,0,0,.10)"></div>
<div class="t" style="left:811.35px;top:157.72px;font-size:9.90px;letter-spacing:0.062px">0.03</div>
<div class="t" style="left:790.70px;top:177.22px;font-size:9.90px">±</div>
<div class="a" style="left:798.3px;top:174.0px;width:35.4px;height:15.6px;background:#fff;border:1px solid #a6aab3;border-top-color:#8b909a;box-shadow:inset 0 1px 1px rgba(0,0,0,.10)"></div>
<div class="t" style="left:814.69px;top:177.39px;font-size:9.70px">999</div>
<div class="btn2" style="left:800.4px;top:198.4px;width:37.4px;height:18.2px;"></div>
<div class="t" style="left:809.15px;top:203.02px;font-size:9.90px;letter-spacing:0.095px">Skip</div>
<div class="btn2" style="left:845.0px;top:198.4px;width:49.8px;height:18.2px;"></div>
<div class="t" style="left:854.45px;top:203.02px;font-size:9.90px;letter-spacing:-0.039px">Search</div>
<div class="a" style="left:523.5px;top:222.4px;width:375.0px;height:213.4px;background:#fff;border:1px solid #8f959e"></div>
<svg width="0" height="0" style="position:absolute"><defs><linearGradient id="fg" x1="0" y1="0" x2="0" y2="1"><stop offset="0" stop-color="#8ea8c0"/><stop offset="1" stop-color="#4a6a88"/></linearGradient><linearGradient id="fb" x1="0" y1="0" x2="0" y2="1"><stop offset="0" stop-color="#d3dfea"/><stop offset="1" stop-color="#9fb4c8"/></linearGradient></defs></svg>
<svg class="a" style="left:527.5px;top:228.5px" width="7" height="7" viewBox="0 0 7 7"><path d="M.4 .6 L6 .6 L3.2 6Z" fill="#4a4e57"/></svg>
<svg class="a" style="left:536.4px;top:225.7px" width="14" height="13" viewBox="0 0 14 13"><path d="M1.1 11 L1.1 2.4 Q1.1 .9 2.6 .9 L7.4 .9 Q8.6 .9 9 2 L9.5 3.6 L12.2 3.6 Q12.9 3.6 12.9 4.4 L12.9 11Z" fill="url(#fb)" stroke="#465a70" stroke-width=".9"/><path d="M2.2 2.2 L7.6 2.2" stroke="#eef3f8" stroke-width=".9"/><path d="M.8 5.2 L13.2 5.2 L12.7 11.2 Q12.6 12.1 11.7 12.1 L2.3 12.1 Q1.4 12.1 1.3 11.2Z" fill="url(#fg)" stroke="#3a4e64" stroke-width=".9"/><path d="M1.8 6 L12.2 6" stroke="#b9cbdb" stroke-width=".7" opacity=".8"/></svg>
<div class="t" style="left:552.51px;top:227.72px;font-size:9.90px;letter-spacing:-0.147px">Matches</div>
<svg class="a" style="left:540.4px;top:243.1px" width="7" height="7" viewBox="0 0 7 7"><path d="M.6 .3 L5.4 3.3 L.6 6.3Z" fill="#4a4e57"/></svg>
<svg class="a" style="left:548.9px;top:240.6px" width="14" height="13" viewBox="0 0 14 13"><path d="M1.1 11 L1.1 2.4 Q1.1 .9 2.6 .9 L7.4 .9 Q8.6 .9 9 2 L9.5 3.6 L12.2 3.6 Q12.9 3.6 12.9 4.4 L12.9 11Z" fill="url(#fb)" stroke="#465a70" stroke-width=".9"/><path d="M2.2 2.2 L7.6 2.2" stroke="#eef3f8" stroke-width=".9"/><path d="M.8 5.2 L13.2 5.2 L12.7 11.2 Q12.6 12.1 11.7 12.1 L2.3 12.1 Q1.4 12.1 1.3 11.2Z" fill="url(#fg)" stroke="#3a4e64" stroke-width=".9"/><path d="M1.8 6 L12.2 6" stroke="#b9cbdb" stroke-width=".7" opacity=".8"/></svg>
<div class="t" style="left:565.21px;top:242.62px;font-size:9.90px;letter-spacing:-0.163px">GC Retention Index</div>
<svg class="a" style="left:540.1px;top:258.3px" width="7" height="7" viewBox="0 0 7 7"><path d="M.4 .6 L6 .6 L3.2 6Z" fill="#4a4e57"/></svg>
<svg class="a" style="left:548.9px;top:255.5px" width="14" height="13" viewBox="0 0 14 13"><path d="M1.1 11 L1.1 2.4 Q1.1 .9 2.6 .9 L7.4 .9 Q8.6 .9 9 2 L9.5 3.6 L12.2 3.6 Q12.9 3.6 12.9 4.4 L12.9 11Z" fill="url(#fb)" stroke="#465a70" stroke-width=".9"/><path d="M2.2 2.2 L7.6 2.2" stroke="#eef3f8" stroke-width=".9"/><path d="M.8 5.2 L13.2 5.2 L12.7 11.2 Q12.6 12.1 11.7 12.1 L2.3 12.1 Q1.4 12.1 1.3 11.2Z" fill="url(#fg)" stroke="#3a4e64" stroke-width=".9"/><path d="M1.8 6 L12.2 6" stroke="#b9cbdb" stroke-width=".7" opacity=".8"/></svg>
<div class="t" style="left:565.21px;top:257.52px;font-size:9.90px;letter-spacing:-0.497px">GC x IMS</div>
<svg class="a" style="left:552.7px;top:273.2px" width="7" height="7" viewBox="0 0 7 7"><path d="M.4 .6 L6 .6 L3.2 6Z" fill="#4a4e57"/></svg>
<svg class="a" style="left:561.5px;top:270.4px" width="14" height="13" viewBox="0 0 14 13"><path d="M1.1 11 L1.1 2.4 Q1.1 .9 2.6 .9 L7.4 .9 Q8.6 .9 9 2 L9.5 3.6 L12.2 3.6 Q12.9 3.6 12.9 4.4 L12.9 11Z" fill="url(#fb)" stroke="#465a70" stroke-width=".9"/><path d="M2.2 2.2 L7.6 2.2" stroke="#eef3f8" stroke-width=".9"/><path d="M.8 5.2 L13.2 5.2 L12.7 11.2 Q12.6 12.1 11.7 12.1 L2.3 12.1 Q1.4 12.1 1.3 11.2Z" fill="url(#fg)" stroke="#3a4e64" stroke-width=".9"/><path d="M1.8 6 L12.2 6" stroke="#b9cbdb" stroke-width=".7" opacity=".8"/></svg>
<div class="t" style="left:577.90px;top:272.42px;font-size:9.90px;letter-spacing:-0.250px">CUSTOM ov-5.ril</div>
<svg class="a" style="left:565.3px;top:288.1px" width="7" height="7" viewBox="0 0 7 7"><path d="M.4 .6 L6 .6 L3.2 6Z" fill="#4a4e57"/></svg>
<svg class="a" style="left:574.0px;top:285.3px" width="14" height="13" viewBox="0 0 14 13"><path d="M1.1 11 L1.1 2.4 Q1.1 .9 2.6 .9 L7.4 .9 Q8.6 .9 9 2 L9.5 3.6 L12.2 3.6 Q12.9 3.6 12.9 4.4 L12.9 11Z" fill="url(#fb)" stroke="#465a70" stroke-width=".9"/><path d="M2.2 2.2 L7.6 2.2" stroke="#eef3f8" stroke-width=".9"/><path d="M.8 5.2 L13.2 5.2 L12.7 11.2 Q12.6 12.1 11.7 12.1 L2.3 12.1 Q1.4 12.1 1.3 11.2Z" fill="url(#fg)" stroke="#3a4e64" stroke-width=".9"/><path d="M1.8 6 L12.2 6" stroke="#b9cbdb" stroke-width=".7" opacity=".8"/></svg>
<div class="t" style="left:590.40px;top:287.32px;font-size:9.90px;letter-spacing:-0.142px">2-Hexanone / C591786 / C6H12O / 100.2</div>
<div class="a" style="left:524.5px;top:299.2px;width:373.0px;height:14.9px;background:#426988"></div>
<svg class="a" style="left:588.5px;top:300.2px" width="11" height="13" viewBox="0 0 11 13"><path d="M.6 .6 L7 .6 L10.4 4 L10.4 12.4 L.6 12.4Z" fill="#f4f5f7" stroke="#8d939c" stroke-width=".9"/><path d="M7 .6 L7 4 L10.4 4Z" fill="#d4d8de" stroke="#8d939c" stroke-width=".7"/></svg>
<div class="t" style="left:603.25px;top:302.22px;font-size:9.90px;letter-spacing:-0.155px;color:#fff">#532 Kovats_RI:784.2 Dt:1.506 Dt:1.1899</div>
<svg class="a" style="left:552.7px;top:317.9px" width="7" height="7" viewBox="0 0 7 7"><path d="M.4 .6 L6 .6 L3.2 6Z" fill="#4a4e57"/></svg>
<svg class="a" style="left:561.5px;top:315.1px" width="14" height="13" viewBox="0 0 14 13"><path d="M1.1 11 L1.1 2.4 Q1.1 .9 2.6 .9 L7.4 .9 Q8.6 .9 9 2 L9.5 3.6 L12.2 3.6 Q12.9 3.6 12.9 4.4 L12.9 11Z" fill="url(#fb)" stroke="#465a70" stroke-width=".9"/><path d="M2.2 2.2 L7.6 2.2" stroke="#eef3f8" stroke-width=".9"/><path d="M.8 5.2 L13.2 5.2 L12.7 11.2 Q12.6 12.1 11.7 12.1 L2.3 12.1 Q1.4 12.1 1.3 11.2Z" fill="url(#fg)" stroke="#3a4e64" stroke-width=".9"/><path d="M1.8 6 L12.2 6" stroke="#b9cbdb" stroke-width=".7" opacity=".8"/></svg>
<div class="t" style="left:577.61px;top:317.12px;font-size:9.90px;letter-spacing:-0.137px">NIST 5proz Phenyl methyl siloxane.ril</div>
<svg class="a" style="left:565.3px;top:332.8px" width="7" height="7" viewBox="0 0 7 7"><path d="M.4 .6 L6 .6 L3.2 6Z" fill="#4a4e57"/></svg>
<svg class="a" style="left:574.0px;top:330.0px" width="14" height="13" viewBox="0 0 14 13"><path d="M1.1 11 L1.1 2.4 Q1.1 .9 2.6 .9 L7.4 .9 Q8.6 .9 9 2 L9.5 3.6 L12.2 3.6 Q12.9 3.6 12.9 4.4 L12.9 11Z" fill="url(#fb)" stroke="#465a70" stroke-width=".9"/><path d="M2.2 2.2 L7.6 2.2" stroke="#eef3f8" stroke-width=".9"/><path d="M.8 5.2 L13.2 5.2 L12.7 11.2 Q12.6 12.1 11.7 12.1 L2.3 12.1 Q1.4 12.1 1.3 11.2Z" fill="url(#fg)" stroke="#3a4e64" stroke-width=".9"/><path d="M1.8 6 L12.2 6" stroke="#b9cbdb" stroke-width=".7" opacity=".8"/></svg>
<div class="t" style="left:590.21px;top:332.02px;font-size:9.90px;letter-spacing:-0.150px">hexan-2-one / C591786 / C6H12O / 100.2</div>
<svg class="a" style="left:588.5px;top:344.9px" width="11" height="13" viewBox="0 0 11 13"><path d="M.6 .6 L7 .6 L10.4 4 L10.4 12.4 L.6 12.4Z" fill="#f4f5f7" stroke="#8d939c" stroke-width=".9"/><path d="M7 .6 L7 4 L10.4 4Z" fill="#d4d8de" stroke="#8d939c" stroke-width=".7"/></svg>
<div class="t" style="left:603.25px;top:346.92px;font-size:9.90px;letter-spacing:-0.147px">#543 Kovats_RI:792 Dt:1.506 Dt:1.1899</div>
<div class="a" style="left:522.0px;top:436.5px;width:379.0px;height:8.0px;background:#cdd1d9;border-top:1px solid #c3c7ce;border-bottom:1px solid #b4b9c2"></div>
<div class="a" style="left:522.0px;top:438.0px;width:379.0px;height:1.0px;background:#a4a9b3"></div>
<div class="a" style="left:703.5px;top:439.8px;width:13.5px;height:2.2px;background:#eceef1;border:1px solid #a5aab3;border-radius:1px"></div>
<div class="btn" style="left:528.6px;top:450.8px;width:43.0px;height:30.8px;"></div>
<div class="btn" style="left:579.5px;top:450.8px;width:43.0px;height:30.8px;"></div>
<div class="btnd" style="left:630.6px;top:451.2px;width:42.6px;height:29.4px;"></div>
<div class="btnd" style="left:681.5px;top:451.2px;width:42.5px;height:29.4px;"></div>
<div class="btnd" style="left:732.4px;top:451.2px;width:42.6px;height:29.4px;"></div>
<div class="t" style="left:536.90px;top:491.42px;font-size:9.90px;letter-spacing:-0.414px;font-weight:bold;color:#3b3f49">Selection</div>
<div class="a" style="left:525.4px;top:504.2px;width:371.4px;height:84.0px;border:1px solid #b2b6bf;border-radius:6px;background:#cdd1d9;box-shadow:0 1px 0 rgba(255,255,255,.55), inset 0 1px 1px rgba(0,0,0,.08)"></div>
<div class="a" style="left:535.5px;top:514.6px;width:351.7px;height:66.6px;background:#fff;border:1px solid #9ea3ac"></div>
<div class="a" style="left:536.5px;top:515.6px;width:349.7px;height:16.6px;background:linear-gradient(#f4f5f7,#e3e6ea 50%,#d5d8de 55%,#dfe2e7);border-bottom:1px solid #a0a5ae"></div>
<div class="a" style="left:536.5px;top:532.7px;width:338.0px;height:12.8px;background:#f2f2f2"></div>
<div class="a" style="left:536.5px;top:545.5px;width:338.0px;height:12.6px;background:#fff"></div>
<div class="a" style="left:536.5px;top:558.1px;width:338.0px;height:12.6px;background:#f2f2f2"></div>
<div class="a" style="left:536.5px;top:570.7px;width:338.0px;height:9.5px;background:#fff"></div>
<div class="a" style="left:572.8px;top:515.6px;width:1.0px;height:16.6px;background:#a9aeb7"></div>
<div class="a" style="left:573.8px;top:515.6px;width:1.0px;height:16.6px;background:rgba(255,255,255,.6)"></div>
<div class="a" style="left:610.4px;top:515.6px;width:1.0px;height:16.6px;background:#a9aeb7"></div>
<div class="a" style="left:611.4px;top:515.6px;width:1.0px;height:16.6px;background:rgba(255,255,255,.6)"></div>
<div class="a" style="left:647.9px;top:515.6px;width:1.0px;height:16.6px;background:#a9aeb7"></div>
<div class="a" style="left:648.9px;top:515.6px;width:1.0px;height:16.6px;background:rgba(255,255,255,.6)"></div>
<div class="a" style="left:685.5px;top:515.6px;width:1.0px;height:16.6px;background:#a9aeb7"></div>
<div class="a" style="left:686.5px;top:515.6px;width:1.0px;height:16.6px;background:rgba(255,255,255,.6)"></div>
<div class="a" style="left:723.7px;top:515.6px;width:1.0px;height:16.6px;background:#a9aeb7"></div>
<div class="a" style="left:724.7px;top:515.6px;width:1.0px;height:16.6px;background:rgba(255,255,255,.6)"></div>
<div class="a" style="left:761.5px;top:515.6px;width:1.0px;height:16.6px;background:#a9aeb7"></div>
<div class="a" style="left:762.5px;top:515.6px;width:1.0px;height:16.6px;background:rgba(255,255,255,.6)"></div>
<div class="a" style="left:799.1px;top:515.6px;width:1.0px;height:16.6px;background:#a9aeb7"></div>
<div class="a" style="left:800.1px;top:515.6px;width:1.0px;height:16.6px;background:rgba(255,255,255,.6)"></div>
<div class="a" style="left:836.6px;top:515.6px;width:1.0px;height:16.6px;background:#a9aeb7"></div>
<div class="a" style="left:837.6px;top:515.6px;width:1.0px;height:16.6px;background:rgba(255,255,255,.6)"></div>
<div class="a" style="left:874.0px;top:515.6px;width:1.0px;height:16.6px;background:#a9aeb7"></div>
<div class="a" style="left:875.0px;top:515.6px;width:1.0px;height:16.6px;background:rgba(255,255,255,.6)"></div>
<div class="t" style="left:539.30px;top:518.42px;font-size:9.90px;letter-spacing:0.015px">Count</div>
<div class="t" style="left:577.10px;top:518.42px;font-size:9.90px;letter-spacing:-0.168px">Com...</div>
<div class="t" style="left:614.70px;top:518.42px;font-size:9.90px;letter-spacing:-0.256px">CAS#</div>
<div class="t" style="left:651.91px;top:518.42px;font-size:9.90px;letter-spacing:-0.150px">Form...</div>
<div class="t" style="left:689.51px;top:518.42px;font-size:9.90px;letter-spacing:-0.508px">MW</div>
<div class="t" style="left:727.71px;top:518.42px;font-size:9.90px;letter-spacing:-0.248px">RI</div>
<div class="t" style="left:765.51px;top:518.42px;font-size:9.90px;letter-spacing:-0.117px">Rt [s...</div>
<div class="t" style="left:803.11px;top:518.42px;font-size:9.90px;letter-spacing:-0.126px">Dt [R...</div>
<div class="t" style="left:840.90px;top:518.42px;font-size:9.90px;letter-spacing:0.206px">Com...</div>
<div class="a" style="left:535.5px;top:532.2px;width:338.5px;height:48.2px;overflow:hidden">
<div class="t" style="left:4.56px;top:2.42px;font-size:9.90px">1</div>
<div class="t" style="left:41.90px;top:2.42px;font-size:9.90px;letter-spacing:-0.135px">2-no...</div>
<div class="t" style="left:79.50px;top:2.42px;font-size:9.90px;letter-spacing:-0.152px">C82...</div>
<div class="t" style="left:117.00px;top:2.42px;font-size:9.90px;letter-spacing:-0.162px">C9H...</div>
<div class="t" style="left:155.06px;top:2.42px;font-size:9.90px;letter-spacing:-0.178px">142.2</div>
<div class="t" style="left:193.26px;top:2.42px;font-size:9.90px;letter-spacing:-0.177px">1094.8</div>
<div class="t" style="left:231.06px;top:2.42px;font-size:9.90px;letter-spacing:-0.127px">112....</div>
<div class="t" style="left:268.66px;top:2.42px;font-size:9.90px;letter-spacing:-0.177px">1.8795</div>
<div class="t" style="left:4.10px;top:14.92px;font-size:9.90px">2</div>
<div class="t" style="left:41.90px;top:14.92px;font-size:9.90px;letter-spacing:-0.135px">2-Oct...</div>
<div class="t" style="left:79.50px;top:14.92px;font-size:9.90px;letter-spacing:-0.147px">C11...</div>
<div class="t" style="left:117.00px;top:14.92px;font-size:9.90px;letter-spacing:-0.162px">C8H...</div>
<div class="t" style="left:155.06px;top:14.92px;font-size:9.90px;letter-spacing:-0.178px">128.2</div>
<div class="t" style="left:192.85px;top:14.92px;font-size:9.90px;letter-spacing:-0.181px">996.9</div>
<div class="t" style="left:230.90px;top:14.92px;font-size:9.90px;letter-spacing:-0.180px">48.232</div>
<div class="t" style="left:268.66px;top:14.92px;font-size:9.90px;letter-spacing:-0.177px">1.7626</div>
<div class="t" style="left:4.25px;top:27.62px;font-size:9.90px">3</div>
<div class="t" style="left:41.90px;top:27.62px;font-size:9.90px;letter-spacing:-0.135px">2-he...</div>
<div class="t" style="left:79.50px;top:27.62px;font-size:9.90px;letter-spacing:-0.147px">C11...</div>
<div class="t" style="left:117.00px;top:27.62px;font-size:9.90px;letter-spacing:-0.162px">C7H...</div>
<div class="t" style="left:155.06px;top:27.62px;font-size:9.90px;letter-spacing:-0.173px">114.2</div>
<div class="t" style="left:192.90px;top:27.62px;font-size:9.90px;letter-spacing:-0.181px">889.6</div>
<div class="t" style="left:230.60px;top:27.62px;font-size:9.90px;letter-spacing:-0.179px">22.374</div>
<div class="t" style="left:268.66px;top:27.62px;font-size:9.90px;letter-spacing:-0.177px">1.6345</div>
<div class="t" style="left:4.40px;top:40.72px;font-size:9.90px">4</div>
<div class="t" style="left:41.90px;top:40.72px;font-size:9.90px;letter-spacing:-0.143px">2-He...</div>
<div class="t" style="left:79.50px;top:40.72px;font-size:9.90px;letter-spacing:-0.152px">C59...</div>
<div class="t" style="left:117.00px;top:40.72px;font-size:9.90px;letter-spacing:-0.162px">C6H...</div>
<div class="t" style="left:155.06px;top:40.72px;font-size:9.90px;letter-spacing:-0.178px">100.2</div>
<div class="t" style="left:192.81px;top:40.72px;font-size:9.90px;letter-spacing:-0.181px">787.0</div>
<div class="t" style="left:231.06px;top:40.72px;font-size:9.90px;letter-spacing:-0.178px">12.084</div>
<div class="t" style="left:268.66px;top:40.72px;font-size:9.90px;letter-spacing:-0.178px">1.5064</div>
</div>
<div class="a" style="left:874.8px;top:532.7px;width:11.6px;height:47.6px;background:linear-gradient(90deg,#d0d3d9,#e2e4e8 35%,#e9ebee);border-left:1px solid #9fa4ad"></div>
<div class="a" style="left:875.8px;top:546.0px;width:10.6px;height:19.8px;background:linear-gradient(180deg,#9ea2ab,#c3c6cd 22%,#cbced4 50%,#b9bcc4 75%,#8a8e97);border-radius:0 10px 10px 0"></div>
<svg class="a" style="left:876px;top:534px" width="10" height="44" viewBox="876 534 10 44"><path d="M877.6 541.7 L884.2 541.7 L880.9 537.1Z M877.6 570.3 L884.2 570.3 L880.9 575.1Z" fill="#474b54"/></svg>
<svg class="a" style="left:522px;top:446px" width="260" height="40" viewBox="522 446 260 40" font-family="Liberation Sans, sans-serif">
<defs><linearGradient id="fo2" x1="0" y1="0" x2="0" y2="1"><stop offset="0" stop-color="#fbc63a"/><stop offset="1" stop-color="#ee8416"/></linearGradient><linearGradient id="fl" x1="0" y1="0" x2="0" y2="1"><stop offset="0" stop-color="#6a9cc0"/><stop offset="1" stop-color="#3f7ca8"/></linearGradient></defs>
<ellipse cx="552" cy="474.6" rx="9" ry="1.2" fill="#6a6a6a" opacity=".5"/>
<path d="M539.8 473.4 L539.8 459 Q539.8 457.6 541.2 457.6 L544.2 457.6 L545.4 459.4 L555.6 459.4 Q556.8 459.4 556.8 460.6 L556.8 473.4Z" fill="#f4cc3a" stroke="#1c1508" stroke-width="1.1" stroke-linejoin="round"/>
<rect x="542" y="461" width="13.4" height="9" fill="#fafafa"/><path d="M543.4 463H554M543.4 465H554" stroke="#9a9a9a" stroke-width=".8"/>
<path d="M540 473.6 L545.4 464.8 L560.8 464.8 L556.2 473.6Z" fill="url(#fo2)" stroke="#1c1508" stroke-width="1.1" stroke-linejoin="round"/>
<path d="M591 455.4 L612.2 455.4 L612.2 477.4 L593.6 477.4 L591 474.8Z" fill="url(#fl)"/>
<rect x="595.4" y="455.4" width="12.6" height="12.6" fill="#bcd6e6"/>
<rect x="596.2" y="470.8" width="11.2" height="6.6" fill="#dfe9f1"/><rect x="598.2" y="472.2" width="2.8" height="4.4" fill="#3f7ca8"/>
<g fill="#8d8d8f"><path d="M641.8 457.4 v8.6 a6.2 1.9 0 0 0 12.4 0 v-8.6Z"/><ellipse cx="648.0" cy="457.4" rx="6.2" ry="1.9"/></g>
<g fill="none" stroke="#b9babd" stroke-width=".7"><path d="M641.8 460.4 a6.2 1.9 0 0 0 12.4 0M641.8 463.4 a6.2 1.9 0 0 0 12.4 0"/><ellipse cx="648.0" cy="457.4" rx="6.2" ry="1.9"/></g>
<path d="M659.2 455.6 l4 4.6 h-2.2 v6.6 h-3.6 v-6.6 h-2.2Z" fill="#8d8d8f"/>
<g fill="#8d8d8f"><path d="M692.1 457.4 v8.6 a6.2 1.9 0 0 0 12.4 0 v-8.6Z"/><ellipse cx="698.3" cy="457.4" rx="6.2" ry="1.9"/></g>
<g fill="none" stroke="#b9babd" stroke-width=".7"><path d="M692.1 460.4 a6.2 1.9 0 0 0 12.4 0M692.1 463.4 a6.2 1.9 0 0 0 12.4 0"/><ellipse cx="698.3" cy="457.4" rx="6.2" ry="1.9"/></g>
<path d="M709.5 455.6 l4 4.6 h-2.2 v6.6 h-3.6 v-6.6 h-2.2Z" fill="#8d8d8f"/>
<text x="651.6" y="476.3" font-size="9.8" font-weight="bold" fill="#8d8d8f">RI</text>
<text x="695.8" y="476.3" font-size="9.8" font-weight="bold" fill="#8d8d8f" letter-spacing="-.1">IMS</text>
<circle cx="753.2" cy="466.4" r="11.3" fill="#929294"/><path d="M748.6 461.8 L757.8 471 M757.8 461.8 L748.6 471" stroke="#c9cacc" stroke-width="2.8" stroke-linecap="round"/>
</svg>

<div class="t" style="left:6.80px;top:597.72px;font-size:9.90px;letter-spacing:-0.220px">Column normalization: C:\Users\tt\.GAS GCxIMS Library\data\1H1_00038_50.dat</div>
<div class="a" style="left:7.6px;top:611.2px;width:892.4px;height:11.2px;border:1px solid #8f959e;border-radius:2px;background:linear-gradient(#c8ccd3,#dcdfe4 30%,#e8eaee 60%,#dde0e5)"></div>
<div class="t" style="left:446.95px;top:611.82px;font-size:9.90px;letter-spacing:-0.913px">0%</div>

</body></html>
